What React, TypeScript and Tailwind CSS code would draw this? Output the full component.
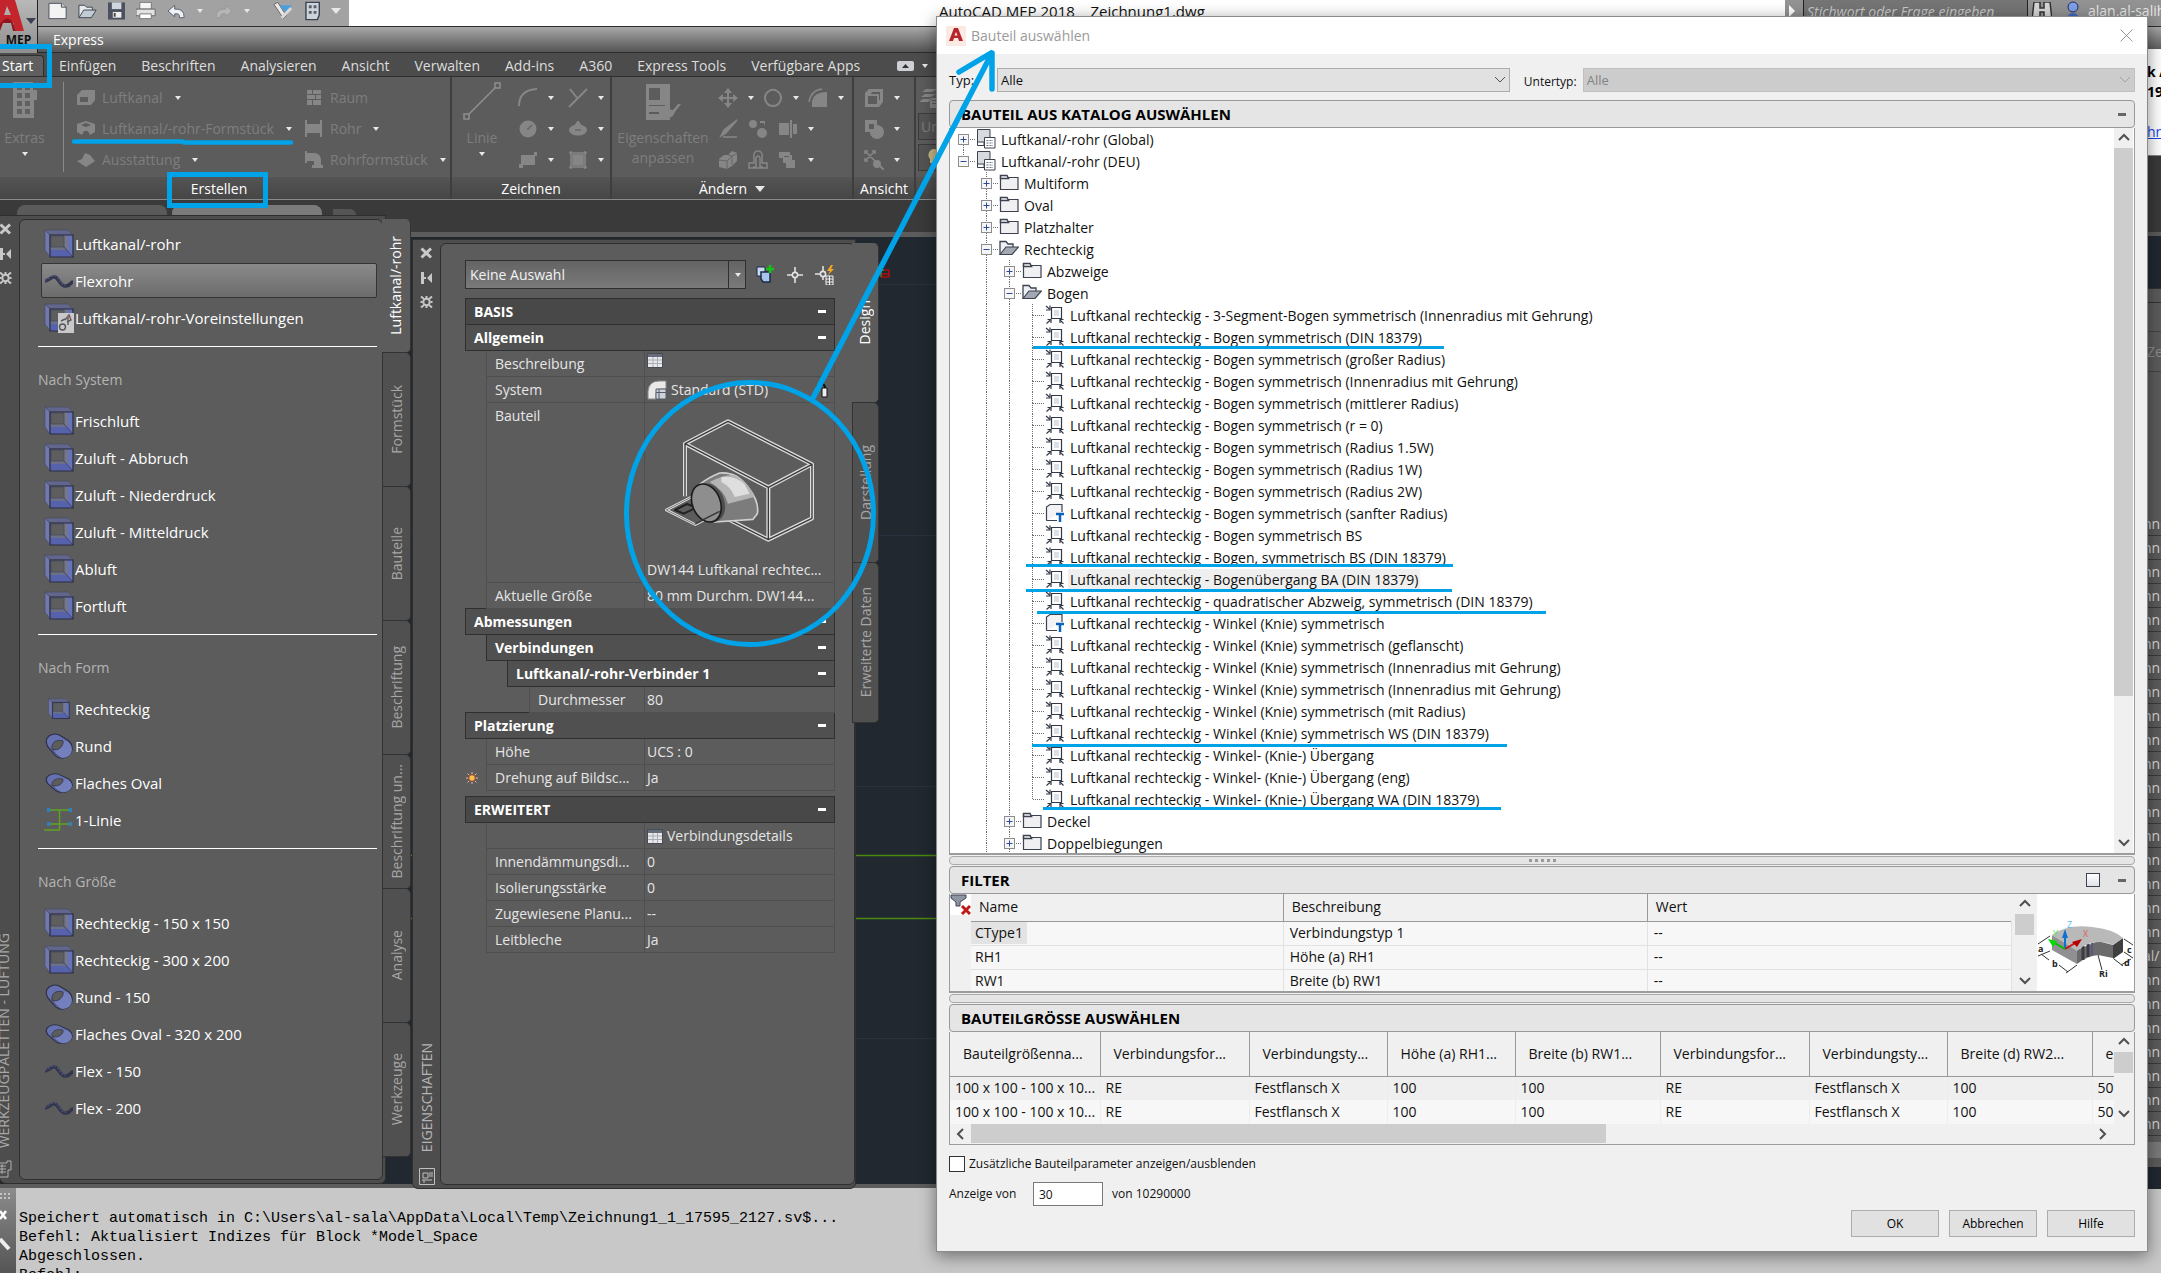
import { useState, type ReactNode } from "react";

/* ---------- data ---------- */

const RIBBON_TABS = ["Einfügen", "Beschriften", "Analysieren", "Ansicht", "Verwalten", "Add-ins", "A360", "Express Tools", "Verfügbare Apps"];

type ToolIcon = "duct" | "ductSmall" | "flex" | "prefs" | "round" | "oval" | "line";
type ToolGroup = { title?: string; items: { label: string; icon: ToolIcon }[] };

const TOOL_GROUPS: ToolGroup[] = [
  {
    items: [
      { label: "Luftkanal/-rohr", icon: "duct" },
      { label: "Flexrohr", icon: "flex" },
      { label: "Luftkanal/-rohr-Voreinstellungen", icon: "prefs" },
    ],
  },
  {
    title: "Nach System",
    items: [
      { label: "Frischluft", icon: "duct" },
      { label: "Zuluft - Abbruch", icon: "duct" },
      { label: "Zuluft - Niederdruck", icon: "duct" },
      { label: "Zuluft - Mitteldruck", icon: "duct" },
      { label: "Abluft", icon: "duct" },
      { label: "Fortluft", icon: "duct" },
    ],
  },
  {
    title: "Nach Form",
    items: [
      { label: "Rechteckig", icon: "ductSmall" },
      { label: "Rund", icon: "round" },
      { label: "Flaches Oval", icon: "oval" },
      { label: "1-Linie", icon: "line" },
    ],
  },
  {
    title: "Nach Größe",
    items: [
      { label: "Rechteckig - 150 x 150", icon: "duct" },
      { label: "Rechteckig - 300 x 200", icon: "duct" },
      { label: "Rund - 150", icon: "round" },
      { label: "Flaches Oval - 320 x 200", icon: "oval" },
      { label: "Flex - 150", icon: "flex" },
      { label: "Flex - 200", icon: "flex" },
    ],
  },
];

const PALETTE_TABS = ["Luftkanal/-rohr", "Formstück", "Bauteile", "Beschriftung", "Beschriftung un...", "Analyse", "Werkzeuge"];
const PROPERTY_TABS = ["Design", "Darstellung", "Erweiterte Daten"];

type TreeNode = { label: string; level: number; icon: "catalog" | "folder" | "open" | "part" | "param"; box?: "+" | "-"; last?: boolean };

const part = (label: string, icon: "part" | "param" = "part", last = false): TreeNode => ({
  label: `Luftkanal rechteckig - ${label}`,
  level: 3,
  icon,
  last,
});

const TREE: TreeNode[] = [
  { label: "Luftkanal/-rohr (Global)", level: 0, icon: "catalog", box: "+" },
  { label: "Luftkanal/-rohr (DEU)", level: 0, icon: "catalog", box: "-", last: true },
  { label: "Multiform", level: 1, icon: "folder", box: "+" },
  { label: "Oval", level: 1, icon: "folder", box: "+" },
  { label: "Platzhalter", level: 1, icon: "folder", box: "+" },
  { label: "Rechteckig", level: 1, icon: "open", box: "-" },
  { label: "Abzweige", level: 2, icon: "folder", box: "+" },
  { label: "Bogen", level: 2, icon: "open", box: "-" },
  part("3-Segment-Bogen symmetrisch (Innenradius mit Gehrung)"),
  part("Bogen symmetrisch (DIN 18379)"),
  part("Bogen symmetrisch (großer Radius)"),
  part("Bogen symmetrisch (Innenradius mit Gehrung)"),
  part("Bogen symmetrisch (mittlerer Radius)"),
  part("Bogen symmetrisch (r = 0)"),
  part("Bogen symmetrisch (Radius 1.5W)"),
  part("Bogen symmetrisch (Radius 1W)"),
  part("Bogen symmetrisch (Radius 2W)"),
  part("Bogen symmetrisch (sanfter Radius)", "param"),
  part("Bogen symmetrisch BS"),
  part("Bogen, symmetrisch BS (DIN 18379)"),
  part("Bogenübergang BA (DIN 18379)"),
  part("quadratischer Abzweig, symmetrisch (DIN 18379)"),
  part("Winkel (Knie) symmetrisch", "param"),
  part("Winkel (Knie) symmetrisch (geflanscht)"),
  part("Winkel (Knie) symmetrisch (Innenradius mit Gehrung)"),
  part("Winkel (Knie) symmetrisch (Innenradius mit Gehrung)"),
  part("Winkel (Knie) symmetrisch (mit Radius)"),
  part("Winkel (Knie) symmetrisch WS (DIN 18379)"),
  part("Winkel- (Knie-) Übergang"),
  part("Winkel- (Knie-) Übergang (eng)"),
  part("Winkel- (Knie-) Übergang WA (DIN 18379)", "part", true),
  { label: "Deckel", level: 2, icon: "folder", box: "+" },
  { label: "Doppelbiegungen", level: 2, icon: "folder", box: "+" },
];

const FILTERS = [
  ["CType1", "Verbindungstyp 1", "--"],
  ["RH1", "Höhe (a) RH1", "--"],
  ["RW1", "Breite (b) RW1", "--"],
];

const SIZE_HEADERS = ["Bauteilgrößenna...", "Verbindungsfor...", "Verbindungsty...", "Höhe (a) RH1...", "Breite (b) RW1...", "Verbindungsfor...", "Verbindungsty...", "Breite (d) RW2...", "e"];
const SIZE_ROW = ["100 x 100 - 100 x 10...", "RE", "Festflansch X", "100", "100", "RE", "Festflansch X", "100", "50"];

/* ---------- small pieces ---------- */

function Caret({ big = false }: { big?: boolean }) {
  return (
    <svg width={big ? 10 : 6} height={big ? 6 : 4} viewBox="0 0 10 6" preserveAspectRatio="none" className="shrink-0">
      <path d="M0 0H10L5 6Z" fill="#e8e8e8" />
    </svg>
  );
}

function Chevron({ dir, color = "#505050", thin = false }: { dir: "up" | "down" | "left" | "right"; color?: string; thin?: boolean }) {
  const d = { up: "M1 8L6 3L11 8", down: "M1 3L6 8L11 3", left: "M8 1L3 6L8 11", right: "M3 1L8 6L3 11" }[dir];
  return (
    <svg width="12" height="12" viewBox="0 0 12 12" fill="none" stroke={color} strokeWidth={thin ? 1 : 2} className="shrink-0">
      <path d={d} />
    </svg>
  );
}

function DuctIcon({ size = 30 }: { size?: number }) {
  return (
    <svg width={size} height={size} viewBox="0 0 30 30" className="shrink-0">
      <path d="M1 1L6 6V28L1 21Z" fill="#6f78b0" stroke="#47495a" strokeWidth=".6" />
      <path d="M1 1H24L29 6H6Z" fill="#62668c" stroke="#47495a" strokeWidth=".6" />
      <path d="M6 6H29V28H6Z" fill="#6a6e86" />
      <path d="M20 6H29V28L20 18Z" fill="#6673b8" />
      <path d="M20 6H24V22L20 18Z" fill="#74778a" />
      <path d="M6 18H20L29 28H6Z" fill="#5663ac" />
      <path d="M6 18H20L23 21H6Z" fill="#6c7087" />
      <path d="M7 7H20V18H7Z" fill="#5e5e5e" stroke="#4a4c5c" strokeWidth=".8" />
      <path d="M20 18L29 28" stroke="#3b3e55" strokeWidth=".8" />
      <path d="M6 6H29V28H6Z" fill="none" stroke="#2a2d40" strokeWidth="1.2" />
    </svg>
  );
}

function ToolGlyph({ icon }: { icon: ToolIcon }) {
  if (icon === "duct") return <DuctIcon />;
  if (icon === "ductSmall") return <DuctIcon size={22} />;
  if (icon === "prefs") {
    return (
      <span className="relative block size-[30px]">
        <DuctIcon />
        <svg width="17" height="20" viewBox="0 0 17 20" className="absolute right-0 bottom-0">
          <path d="M1 0H17V20H1Z" fill="#c9c9cc" />
          <circle cx="5.500" cy="14" r="3" fill="none" stroke="#555" strokeWidth="1.400" />
          <path d="M8 7L12 2L14 7L10 9M11 4V12M4 8L8 6" stroke="#5a5a5a" strokeWidth="1.400" fill="none" />
          <path d="M10 4L14 5" stroke="#b06a6a" strokeWidth="1.200" />
        </svg>
      </span>
    );
  }
  if (icon === "flex") {
    return (
      <svg width="30" height="16" viewBox="0 0 30 16" fill="none">
        <path d="M1 8C5 8 7 3 11 4S16 14 22 13S26 9 29 9" stroke="#33364a" strokeWidth="3.400" />
        <path d="M1 7C5 7 7 2 11 3S16 13 22 12" stroke="#4c5588" strokeWidth="1.200" strokeDasharray="2 1.500" />
      </svg>
    );
  }
  if (icon === "line") {
    return (
      <svg width="30" height="24" viewBox="0 0 30 24" fill="none">
        <path d="M5 2H26M5 16H26M15.500 2V22M0 22H16" stroke="#5fa324" strokeWidth="1.400" />
        <path d="M3 0h3v4h-3zM25 0h3v4h-3zM3 14h3v4h-3zM25 14h3v4h-3z" fill="#2b7fc4" />
      </svg>
    );
  }
  const flat = icon === "oval";
  return (
    <svg width="28" height={flat ? 20 : 26} viewBox="0 0 28 26" preserveAspectRatio="none">
      <path d="M3 14Q-1 7 4 3Q10 -1 16 3L24 8Q29 13 26 20Q22 26 15 25Q11 24 9 21Z" fill="#6571b0" stroke="#2c2f45" strokeWidth="1.200" />
      <ellipse cx="18" cy="16.500" rx="9" ry="8.500" fill="#7480bd" />
      <path d="M7 16C6 9 12 6 18 8C19 13 13 19 7 16Z" fill="#5c5c5c" stroke="#3a3c50" />
      <path d="M7 16C9 19 12 23 16 25" stroke="#3a3c50" strokeWidth=".8" fill="none" />
    </svg>
  );
}

function PaletteControls() {
  return (
    <svg width="13" height="62" viewBox="0 0 13 62" className="text-[#c8c8c8]">
      <path d="M1.500 1.500L11 10.500M11 1.500L1.500 10.500" stroke="currentColor" strokeWidth="3" />
      <path d="M1 25H4V37H1ZM4 30H6V32H4ZM12 26V36L7 31Z" fill="currentColor" />
      <circle cx="6.500" cy="55" r="3.200" fill="none" stroke="currentColor" strokeWidth="2" />
      <path d="M6.500 49V51M6.500 59V61M.5 55H2.500M10.500 55H12.500M1 49.500L4 52M12 49.500L9 52M1 60.500L4 58M12 60.500L9 58" stroke="currentColor" strokeWidth="2" />
    </svg>
  );
}

function SideTab({ label, active, tall }: { label: string; active: boolean; tall?: boolean }) {
  return (
    <button
      className={`flex w-full items-center justify-center rounded-r-[5px] border-r border-b border-[#333] ${tall ? "h-[160px]" : "h-[134px]"} ${
        active ? "bg-[#5c5c5c] text-white" : "border-l bg-[#505050] text-[#a6a6a6]"
      }`}
    >
      <span className="rotate-180 whitespace-nowrap [writing-mode:vertical-rl]">{label}</span>
    </button>
  );
}

/* ---------- ribbon ---------- */

const GLYPHS: Record<string, ReactNode> = {
  duct: <path d="M1 7L6 2H19V12L15 17H1ZM4 9H12V14H4Z" fillRule="evenodd" fill="currentColor" />,
  fitting: <path d="M1 5L10 2L19 5V13L14 16L12 12H8L6 16L1 13ZM5 6L10 8L15 6L10 4Z" fillRule="evenodd" fill="currentColor" />,
  equip: <path d="M1 11L6 9L9 3L14 5L19 11L10 17Z" fill="currentColor" />,
  room: <path d="M3 2H8V6H3ZM9 2H17V6H9ZM3 7H11V11H3ZM12 7H17V11H12ZM3 12H8V17H3ZM9 12H17V17H9Z" fill="currentColor" />,
  pipe: <path d="M1 1H3V5H16V1H18V18H16V14H3V18H1Z" fill="currentColor" />,
  elbow: <path d="M1 1H3V3H10Q17 3 17 11V15H19V18H8V15H10V11H3V13H1Z" fill="currentColor" />,
  arc: <path d="M1 18Q1 2 19 1" fill="none" stroke="currentColor" strokeWidth="2" />,
  cross: <path d="M1 19L19 1M2 1L10 11" fill="none" stroke="currentColor" strokeWidth="2" />,
  circle: (
    <>
      <circle cx="10" cy="10" r="8.500" fill="currentColor" />
      <path d="M10 10L14 6M9 10H11" stroke="#666" strokeWidth="1.500" />
    </>
  ),
  ellipse: (
    <>
      <ellipse cx="10" cy="11" rx="9" ry="5.500" fill="currentColor" />
      <path d="M10 2V12M6 8L10 3L14 8" stroke="currentColor" strokeWidth="2" fill="none" />
      <path d="M7 11H13" stroke="#666" strokeWidth="1.500" />
    </>
  ),
  rect: <path d="M3 5H16V2H19V6H17V15H5V18H1V14H3Z" fill="currentColor" />,
  hatch: <path d="M5 5H15V15H5ZM3 1V19M17 1V19M1 3H19M1 17H19" fill="currentColor" stroke="currentColor" strokeWidth="1.500" />,
  move: <path d="M10 0L14 5H11V9H15V6L20 10L15 14V11H11V15H14L10 20L6 15H9V11H5V14L0 10L5 6V9H9V5H6Z" fill="currentColor" />,
  rotate: <path d="M14 3A8 8 0 1 1 6 3M6 3A8 8 0 0 1 14 3" fill="none" stroke="currentColor" strokeWidth="2" />,
  fillet: (
    <>
      <path d="M4 19V13Q6 4 19 4V19Z" fill="currentColor" />
      <path d="M1 14Q3 2 14 1" fill="none" stroke="currentColor" strokeWidth="1.500" />
    </>
  ),
  edit: <path d="M19 1L8 14L3 17L6 11ZM5 18H19" fill="currentColor" stroke="currentColor" strokeWidth="1.500" />,
  copy: <path d="M5 1a4 4 0 1 1 0 8a4 4 0 1 1 0-8zM14 9a5 5 0 1 1 0 10a5 5 0 1 1 0-10zM12 2h5v5l-1-3h-4z" fill="currentColor" />,
  stretch: <path d="M1 4H11V16H1ZM12 1H14V19H12ZM15 5H19V15H15Z" fill="currentColor" />,
  blocks: (
    <>
      <path d="M1 9L6 5H10L14 1L19 3V11L14 16L9 19L1 17Z" fill="currentColor" />
      <path d="M1 10L9 11V19M9 11L14 6V15M10 5L14 6L19 4" stroke="#666" fill="none" />
    </>
  ),
  offset: <path d="M1 18V13H6V8Q5 1 10 1Q15 1 14 8V13H19V18ZM5 17H8V8Q10 4 12 8V17H15" fill="none" stroke="currentColor" strokeWidth="1.500" />,
  order: <path d="M1 2H12V5H14V10H17V18H8V13H5V8H1ZM6 6V7H11V6Z" fillRule="evenodd" fill="currentColor" />,
  cube: <path d="M1 5L5 1H19V14L15 19H1ZM4 8H13V16H4ZM8 4H16V12H15V6H7Z" fillRule="evenodd" fill="currentColor" />,
  visual: <path d="M1 1H13V6A7 7 0 1 1 6 13H1ZM5 5V10H10V5Z" fillRule="evenodd" fill="currentColor" />,
  zoomx: (
    <>
      <path d="M1 1L11 11M11 1L1 11M1 4V1H4M8 1H11V4M1 8V11H4" stroke="currentColor" strokeWidth="1.500" fill="none" />
      <circle cx="13" cy="14" r="4" fill="currentColor" />
      <path d="M16 16L20 20" stroke="currentColor" strokeWidth="2" />
    </>
  ),
  layers: <path d="M4 4L8 1H19L14 4ZM3 9L7 6H18L13 9ZM1 14L5 11H14L10 14ZM12 10H20V20H12ZM14 12V13H18V12ZM14 15V16H18V15Z" fillRule="evenodd" fill="currentColor" />,
};

function Glyph({ name }: { name: string }) {
  return (
    <svg width="20" height="20" viewBox="0 0 20 20" className="shrink-0 text-[#868686]">
      {GLYPHS[name]}
    </svg>
  );
}

function RibbonItem({ icon, label, caret }: { icon: string; label?: string; caret?: boolean }) {
  return (
    <button className="flex h-[31px] items-center text-left text-[#7e7e7e]">
      <Glyph name={icon} />
      {label && <span className="ml-[6px] whitespace-nowrap">{label}</span>}
      {caret && (
        <span className={label ? "ml-3" : "ml-2.5"}>
          <Caret />
        </span>
      )}
    </button>
  );
}

function RibbonPanel({ title, className, caret, children }: { title: string; className: string; caret?: boolean; children: ReactNode }) {
  return (
    <section className={`flex shrink-0 flex-col border-r-2 border-[#3e3e3e] ${className}`}>
      <div className="flex h-[100px] overflow-hidden pt-[5px]">{children}</div>
      <h2 className="flex h-[22px] items-center justify-center gap-2 bg-linear-to-b from-[#545454] to-[#464646] pt-px text-white">
        {title}
        {caret && <Caret big />}
      </h2>
    </section>
  );
}

function Ribbon() {
  return (
    <div className="flex h-[122px] overflow-hidden bg-[#5c5c5c]">
      <RibbonPanel title="Erstellen" className="w-[452px] [&>h2]:pr-3">
        <button className="flex w-[49px] flex-col items-center text-[#7e7e7e]">
          <svg width="26" height="36" viewBox="0 0 26 36" className="text-[#868686]">
            <path d="M1 0H21V8H25V18H22V36H1Z" fill="currentColor" />
            <path d="M5 3h5v5h-5zM13 3h5v5h-5zM5 11h5v5h-5zM13 11h5v5h-5zM5 19h5v5h-5zM13 19h5v5h-5zM5 27h5v5h-5zM13 27h5v5h-5z" fill="#606060" />
          </svg>
          <span className="mt-2.5">Extras</span>
          <span className="mt-1">
            <Caret />
          </span>
        </button>
        <div className="ml-3.5 h-[90px] w-px bg-[#8a8a8a]" />
        <div className="ml-3 w-[228px]">
          <RibbonItem icon="duct" label="Luftkanal" caret />
          <RibbonItem icon="fitting" label="Luftkanal/-rohr-Formstück" caret />
          <RibbonItem icon="equip" label="Ausstattung" caret />
        </div>
        <div>
          <RibbonItem icon="room" label="Raum" />
          <RibbonItem icon="pipe" label="Rohr" caret />
          <RibbonItem icon="elbow" label="Rohrformstück" caret />
        </div>
      </RibbonPanel>

      <RibbonPanel title="Zeichnen" className="w-[160px]">
        <button className="ml-2.5 flex w-[40px] flex-col items-center text-[#7e7e7e]">
          <svg width="38" height="38" viewBox="0 0 38 38" fill="none" stroke="#8f8f8f" strokeWidth="1.500">
            <path d="M5 33L33 5M1 32h5v5h-5zM32 1h5v5h-5z" />
          </svg>
          <span className="mt-2">Linie</span>
          <span className="mt-1">
            <Caret />
          </span>
        </button>
        <div className="ml-4">
          <RibbonItem icon="arc" caret />
          <RibbonItem icon="circle" caret />
          <RibbonItem icon="rect" caret />
        </div>
        <div className="ml-3.5">
          <RibbonItem icon="cross" caret />
          <RibbonItem icon="ellipse" caret />
          <RibbonItem icon="hatch" caret />
        </div>
      </RibbonPanel>

      <RibbonPanel title="Ändern" caret className="w-[242px]">
        <button className="flex w-[102px] flex-col items-center pt-0.5 text-[#7e7e7e]">
          <svg width="36" height="38" viewBox="0 0 36 38" className="text-[#868686]">
            <path d="M1 0H25V36H1ZM4 4V16H15V4ZM4 21H20V22H4ZM4 28H14V30H4Z" fillRule="evenodd" fill="currentColor" />
            <path d="M36 20L30 28Q26 38 15 32Q20 24 28 26L33 20Z" fill="currentColor" />
          </svg>
          <span className="mt-1.5 leading-5">Eigenschaften</span>
          <span className="leading-5">anpassen</span>
        </button>
        <div className="ml-1">
          <div className="flex gap-[9px]">
            <RibbonItem icon="move" caret />
            <RibbonItem icon="rotate" caret />
            <RibbonItem icon="fillet" caret />
          </div>
          <div className="flex gap-2.5">
            <RibbonItem icon="edit" />
            <RibbonItem icon="copy" />
            <RibbonItem icon="stretch" caret />
          </div>
          <div className="flex gap-2.5">
            <RibbonItem icon="blocks" />
            <RibbonItem icon="offset" />
            <RibbonItem icon="order" caret />
          </div>
        </div>
      </RibbonPanel>

      <RibbonPanel title="Ansicht" className="w-[62px]">
        <div className="ml-2.5">
          <RibbonItem icon="cube" caret />
          <RibbonItem icon="visual" caret />
          <RibbonItem icon="zoomx" caret />
        </div>
      </RibbonPanel>

      <RibbonPanel title="" className="min-w-0 grow">
        <div className="ml-0.5 w-[320px]">
          <RibbonItem icon="layers" />
          <div className="flex h-[27px] items-center border border-[#3c3c3c] bg-[#545454] px-0.5 text-[#7e7e7e]">Un</div>
          <div className="mt-1 flex h-[27px] items-center border border-[#3c3c3c] bg-[#545454] px-2">
            <svg width="14" height="20" viewBox="0 0 14 20">
              <path d="M7 1a6 6 0 0 1 4 10v4H3v-4A6 6 0 0 1 7 1z" fill="#c9b98a" />
              <path d="M4 16h6v3H4z" fill="#8a8a8a" />
            </svg>
          </div>
        </div>
      </RibbonPanel>
    </div>
  );
}

/* ---------- main window top ---------- */

function QuickAccess() {
  return (
    <div className="flex h-[26px] w-[311px] shrink-0 items-center gap-[11px] bg-[#a2a2a2] pr-2 pb-1 pl-[10px]">
      <svg width="20" height="18" viewBox="0 0 20 18">
        <path d="M1 1H14L19 5V17H1Z" fill="#f3f3f3" stroke="#4a4f5c" />
        <path d="M14 1V5H19" fill="#d0d0d0" stroke="#4a4f5c" />
      </svg>
      <svg width="20" height="16" viewBox="0 0 20 16">
        <path d="M1 15V2H7L9 4H15V7" fill="#e6e9ee" stroke="#3d4350" />
        <path d="M1 15L6 7H19L14 15Z" fill="#c3cbd6" stroke="#3d4350" />
      </svg>
      <svg width="18" height="18" viewBox="0 0 18 18">
        <path d="M0 0H18V18H0Z" fill="#4c5160" />
        <path d="M4 0H14V7H4Z" fill="#cfd6de" />
        <path d="M5 10H14V16H5Z" fill="#eee" />
        <path d="M6 11H8V15H6Z" fill="#444" />
      </svg>
      <svg width="20" height="18" viewBox="0 0 20 18">
        <path d="M4 0H16V7H4Z" fill="#f5f5f5" stroke="#777" />
        <path d="M0 7H20V14H0Z" fill="#e2e2e2" stroke="#666" />
        <path d="M4 12H16V17H4Z" fill="#fff" stroke="#777" />
      </svg>
      <svg width="20" height="15" viewBox="0 0 20 15">
        <path d="M1 7L8 1V5Q18 4 18 14H13Q14 9 8 10V13Z" fill="#eef1f5" stroke="#5a606e" />
      </svg>
      <Caret />
      <svg width="20" height="15" viewBox="0 0 20 15">
        <path d="M19 7L12 1V5Q2 4 2 14H7Q6 9 12 10V13Z" fill="#b5b5b5" stroke="#979797" />
      </svg>
      <Caret />
      <svg width="22" height="18" viewBox="0 0 22 18" className="ml-3">
        <path d="M1 2L5 0L14 14L11 17Z" fill="#e8e8e8" stroke="#666" />
        <path d="M7 3H20L14 12Z" fill="#4aa0dd" />
        <path d="M19 6L9 16" stroke="#d8d8d8" strokeWidth="3" />
      </svg>
      <svg width="16" height="20" viewBox="0 0 16 20">
        <path d="M1 1H15V14L13 19H1Z" fill="#cdd3da" stroke="#3d4350" strokeWidth="1.500" />
        <path d="M4 4h3v3H4zM9 4h3v3H9zM4 10h3v3H4zM9 10h3v3H9z" fill="#59606c" />
      </svg>
      <Caret big />
    </div>
  );
}

function MainHeader() {
  return (
    <header className="bg-[#4c4c4c] text-[#dcdcdc]">
      <div className="flex">
        <button aria-label="MEP" className="flex h-[53px] w-[38px] shrink-0 flex-col border-r border-[#222] bg-linear-to-b from-[#b9b9b9] to-[#8f8f8f]">
          <span className="flex">
            <svg width="24" height="32" viewBox="0 0 24 32">
              <path d="M0 0H15L24 31H16L13 22H3L0 29ZM7 6L4 15H11Z" fillRule="evenodd" fill="#c4242b" />
              <path d="M0 24Q10 10 16 31H13L11 23H3L0 31Z" fill="#8f161c" />
            </svg>
            <svg width="10" height="6" viewBox="0 0 10 6" className="mt-[18px] ml-0.5">
              <path d="M0 0H10L5 6Z" fill="#3a4150" />
            </svg>
          </span>
          <span className="w-full text-center text-xs leading-4 font-bold text-[#111]">MEP</span>
        </button>
        <div className="min-w-0 grow">
          <div className="flex h-[26px] bg-white">
            <QuickAccess />
            <div className="grow pl-[590px] text-[15px] leading-[22px] whitespace-pre text-[#111]">{"AutoCAD MEP 2018    Zeichnung1.dwg"}</div>
            <div className="flex w-[376px] shrink-0 items-start gap-2 overflow-hidden bg-[#939393]">
              <svg width="6" height="12" viewBox="0 0 6 12" className="mt-[5px] ml-1 shrink-0">
                <path d="M0 0L6 6L0 12Z" fill="#fff" />
              </svg>
              <input
                aria-label="Suche"
                placeholder="Stichwort oder Frage eingeben"
                className="h-[26px] w-[225px] shrink-0 border-x border-[#222] bg-[#757575] px-[3px] pb-1 text-[14px] italic placeholder:text-[#c9c9c9]"
              />
              <svg width="20" height="18" viewBox="0 0 20 18" className="mt-0.5 -ml-1 shrink-0">
                <path d="M2 0H8V6H12V0H18L20 18H12V10H8V18H0Z" fill="#d7d7d7" stroke="#333" strokeWidth="1.500" />
              </svg>
              <svg width="14" height="20" viewBox="0 0 14 20" className="mt-px ml-1.5 shrink-0">
                <circle cx="7" cy="6" r="5" fill="#7f9fe8" stroke="#1e2f66" />
                <path d="M1 20Q1 12 7 12T13 20Z" fill="#4468c4" />
              </svg>
              <span className="shrink-0 leading-[22px] whitespace-nowrap text-[#e8e8e8]">alan.al-salih</span>
            </div>
          </div>
          <div className="flex h-[27px] items-center border-y border-[#2c2c2c] bg-linear-to-b from-[#a9a9a9] to-[#555] pl-[15px] text-white">Express</div>
        </div>
      </div>
      <nav className="flex h-6 items-center gap-[25px] border-b border-[#2e2e2e] pt-0.5">
        <button className="-mr-[10px] h-[21px] w-[44px] self-end rounded-tr-sm border-t border-r border-[#2e2e2e] bg-[#5f5f5f] pr-2 pl-0.5 text-left text-white">Start</button>
        {RIBBON_TABS.map((t) => (
          <button key={t} className="whitespace-nowrap">
            {t}
          </button>
        ))}
        <span className="ml-3 flex items-center gap-2">
          <svg width="17" height="10" viewBox="0 0 17 10">
            <rect width="17" height="10" rx="2" fill="#cfcfd6" />
            <path d="M5 7H12L8.500 3Z" fill="#333" />
          </svg>
          <Caret />
        </span>
      </nav>
      <Ribbon />
    </header>
  );
}

/* ---------- tool palette ---------- */

function ToolPalette() {
  const [selected, setSelected] = useState("Flexrohr");
  return (
    <aside className="absolute top-[215px] bottom-[89px] left-0 flex w-[412px]">
      <div className="flex w-[386px] shrink-0 rounded-b-md border-t border-r border-b border-[#2f2f2f] bg-[#4d4d4d] pt-[3px] pr-[2px] pb-[3px]">
        <div className="flex w-[19px] shrink-0 flex-col items-end justify-between pt-1 pr-[7px] pb-0.5">
          <PaletteControls />
          <div className="flex flex-col items-end gap-3">
            <span className="rotate-180 leading-4 whitespace-nowrap text-[#a8a8a8] [writing-mode:vertical-rl]">WERKZEUGPALETTEN - LÜFTUNG</span>
            <svg width="14" height="18" viewBox="0 0 14 18" fill="none" stroke="#b0b0b0">
              <path d="M0 3H9V1H13V10H10V17H0M1 6h7M1 9h7M1 12h7M4 4v10" />
            </svg>
          </div>
        </div>
        <div className="grow rounded-md border border-[#2f2f2f] bg-[#5c5c5c] pt-[5px] pr-[5px] pl-[18px]">
          {TOOL_GROUPS.map((g, i) => (
            <div key={i} className="flex flex-col">
              {g.title && (
                <>
                  <hr className="mt-2.5 mb-[11px] h-px border-0 bg-white" />
                  <h3 className="flex h-11 items-center text-[#b4b4b4]">{g.title}</h3>
                </>
              )}
              {g.items.map((it) => (
                <button
                  key={it.label}
                  onClick={() => setSelected(it.label)}
                  className={`my-px ml-[3px] flex h-[35px] items-center rounded-xs border text-left text-[15px] text-white ${
                    selected === it.label ? "border-[#353535] bg-linear-to-b from-[#8a8a8a] to-[#6c6c6c]" : "border-transparent"
                  }`}
                >
                  <span className="flex w-[33px] justify-center">
                    <ToolGlyph icon={it.icon} />
                  </span>
                  {it.label}
                </button>
              ))}
            </div>
          ))}
        </div>
      </div>
      <div className="-ml-[4px] w-[29px] pt-1">
        {PALETTE_TABS.map((t, i) => (
          <SideTab key={t} label={t} active={i === 0} />
        ))}
      </div>
    </aside>
  );
}

/* ---------- properties ---------- */

function GroupHeader({ title, indent = "", dark }: { title: string; indent?: string; dark?: boolean }) {
  return (
    <button className={`-mt-px flex h-[27px] items-center justify-between self-stretch border border-[#2f2f2f] pr-2 pl-2 text-left font-bold text-white ${indent} ${dark ? "bg-[#484848]" : "bg-[#505050]"}`}>
      {title}
      <span className="h-[3px] w-2 bg-white" />
    </button>
  );
}

function PropRow({ label, value, tall, nested, star }: { label: string; value: ReactNode; tall?: boolean; nested?: boolean; star?: boolean }) {
  return (
    <div className={`relative flex border-r border-b border-l border-[#4f4f4f] text-[#e6e6e6] ${tall ? "h-[180px]" : "h-[26px]"} ${nested ? "ml-[64px]" : "ml-[21px]"}`}>
      {star && (
        <svg width="12" height="12" viewBox="0 0 12 12" className="absolute top-[7px] -left-[21px]">
          <circle cx="6" cy="6" r="3" fill="#f2c14e" stroke="#d8642c" />
          <path d="M6 0V2M6 10V12M0 6H2M10 6H12M1.500 1.500L3 3M9 9L10.500 10.500M1.500 10.500L3 9M9 3L10.500 1.500" stroke="#e9b7a0" />
        </svg>
      )}
      <span className={`shrink-0 border-r border-[#4f4f4f] pl-2 leading-[26px] whitespace-nowrap ${nested ? "w-[115px]" : "w-[158px]"}`}>{label}</span>
      <div className="min-w-0 grow pl-[2px] leading-[26px] whitespace-nowrap">{value}</div>
    </div>
  );
}

function TableIcon() {
  return (
    <svg width="16" height="15" viewBox="0 0 16 15" className="shrink-0">
      <rect x=".5" y=".5" width="15" height="14" fill="#e8e8ea" stroke="#474c58" />
      <path d="M1 1H15V4H1Z" fill="#666c7a" />
      <path d="M1 7H15M1 10.500H15M6 4V14M10.500 4V14" stroke="#a9adb6" />
    </svg>
  );
}

function PartPreview() {
  return (
    <svg width="154" height="127" viewBox="790 570 462 381" fill="none" strokeLinejoin="round">
      <g stroke="#dcdcdc" strokeWidth="12">
        <path d="M856 650L985 583L1237 712L1106 781ZM856 650V808M1106 781V938L1237 874V712M1106 938L980 874" />
      </g>
      <g stroke="#3a3a3a" strokeWidth="4">
        <path d="M856 650L985 583L1237 712L1106 781ZM856 650V808M1106 781V938L1237 874V712M1106 938L980 874" />
      </g>
      <path d="M800 849L873 811L962 853L887 893Z" stroke="#e0e0e0" strokeWidth="8" />
      <path d="M800 849L873 811L962 853L887 893Z" stroke="#444" strokeWidth="2" />
      <path d="M826 849L862 831L890 842L852 860Z" stroke="#222" strokeWidth="6" />
      <path d="M900 772Q925 752 960 738Q1010 733 1045 780Q1080 825 1073 860L1060 877L945 885Z" fill="#7c7c7c" stroke="#d0d0d0" strokeWidth="5" />
      <path d="M930 765Q980 740 1005 745Q1050 770 1064 810L985 830Q975 790 930 765Z" fill="#b4b4b4" />
      <path d="M965 750Q1010 745 1035 772L1050 800L1005 810Q995 780 965 765Z" fill="#dedede" />
      <ellipse cx="930" cy="827" rx="44" ry="60" transform="rotate(-22 930 827)" fill="#4e4e4e" />
      <ellipse cx="920" cy="828" rx="42" ry="59" transform="rotate(-22 920 828)" fill="#8e8e8e" stroke="#1c1c1c" strokeWidth="5" />
      <path d="M887 890L960 853" stroke="#333" strokeWidth="4" />
    </svg>
  );
}

function PropertiesPalette() {
  return (
    <aside className="absolute top-[239px] bottom-[84px] left-[412px] flex w-[468px]">
      <div className="flex w-[444px] shrink-0 rounded-b-md border border-[#2f2f2f] bg-[#4d4d4d] pt-[3px] pr-[2px] pb-[3px]">
        <div className="flex w-[27px] shrink-0 flex-col items-center justify-between pt-1">
          <PaletteControls />
          <div className="flex flex-col items-center gap-4">
            <span className="rotate-180 leading-4 whitespace-nowrap text-[#b4b4b4] [writing-mode:vertical-rl]">EIGENSCHAFTEN</span>
            <svg width="16" height="17" viewBox="0 0 16 17" fill="none" stroke="#c0c0c0">
              <path d="M.5 .5H15.500V16.500H.5ZM4 5h5v5H4zM11 4v5M13 4v5M3 12h10M5 12v3" />
            </svg>
          </div>
        </div>
        <div className="flex grow flex-col rounded-md border border-[#2f2f2f] bg-[#5c5c5c] pr-[19px] pl-[24px]">
          <div className="mt-4 flex items-center">
            <span className="relative flex">
              <select aria-label="Auswahl" className="h-[29px] w-[281px] appearance-none border border-[#2f2f2f] bg-linear-to-b from-[#646464] to-[#7a7a7a] pl-1 text-[#f2f2f2]">
                <option>Keine Auswahl</option>
              </select>
              <span className="pointer-events-none absolute inset-y-0 right-0 flex w-[18px] items-center justify-center border-l border-[#2f2f2f]">
                <Caret />
              </span>
            </span>
            <button aria-label="Auswahl umschalten" className="ml-2.5">
              <svg width="19" height="19" viewBox="0 0 19 19">
                <path d="M1 2H9V11H1Z" fill="#c9daf0" stroke="#1c2a44" />
                <path d="M5 7H14V17H7L5 14Z" fill="#a9c4ec" stroke="#1c2a44" strokeWidth="1.500" />
                <path d="M14 0V8M10 4H18" stroke="#12c512" strokeWidth="2.500" />
              </svg>
            </button>
            <button aria-label="Objekte wählen" className="ml-3">
              <svg width="16" height="16" viewBox="0 0 16 16" stroke="#e2e2e2" strokeWidth="1.600" fill="none">
                <path d="M8 0V5M8 11V16M0 8H5M11 8H16" />
                <circle cx="8" cy="8" r="2.600" />
              </svg>
            </button>
            <button aria-label="Schnellauswahl" className="ml-3">
              <svg width="20" height="20" viewBox="0 0 20 20" fill="none">
                <path d="M8 1V6M8 12V15M0 9H5" stroke="#e2e2e2" strokeWidth="1.600" />
                <circle cx="8" cy="9" r="2.600" stroke="#e2e2e2" strokeWidth="1.600" />
                <path d="M16 0L12 6H15L13 10L19 4H16L18 0Z" fill="#f5a623" />
                <path d="M11 11H18V20H11ZM11 14H18M11 17H18M14.500 11V20" stroke="#f2f2f2" />
              </svg>
            </button>
          </div>

          <div className="mt-[9px] flex flex-col pt-px">
            <GroupHeader title="BASIS" dark />
            <GroupHeader title="Allgemein" />
            <PropRow label="Beschreibung" value={<span className="block pt-0.5"><TableIcon /></span>} />
            <PropRow
              label="System"
              value={
                <span className="flex items-center gap-1">
                  <svg width="20" height="20" viewBox="0 0 20 20">
                    <path d="M1 19V11Q2 1 12 1H19V9H14Q10 10 9 13V19Z" fill="#e9e9e9" stroke="#888" />
                    <path d="M9 9H19V19H9Z" fill="#cfd3da" stroke="#555c6a" />
                    <path d="M9 12.500H19M12 9V19" stroke="#555c6a" />
                  </svg>
                  Standard (STD)
                  <svg width="12" height="15" viewBox="0 0 12 15" className="mr-1.5 ml-auto">
                    <path d="M1 8V5Q1 1 5 1Q9 1 9 5V8" stroke="#111" strokeWidth="2" fill="none" />
                    <path d="M6 5H11V14H6Z" fill="#eee" stroke="#111" />
                  </svg>
                </span>
              }
            />
            <PropRow
              tall
              label="Bauteil"
              value={
                <span className="block pt-3.5">
                  <span className="block pl-4">
                    <PartPreview />
                  </span>
                  <span className="mt-[13px] block">DW144 Luftkanal rechtec...</span>
                </span>
              }
            />
            <PropRow label="Aktuelle Größe" value="80 mm Durchm. DW144..." />
            <GroupHeader title="Abmessungen" />
            <GroupHeader title="Verbindungen" indent="ml-[21px]" />
            <GroupHeader title="Luftkanal/-rohr-Verbinder 1" indent="ml-[42px]" />
            <PropRow label="Durchmesser" value="80" nested />
            <GroupHeader title="Platzierung" />
            <PropRow label="Höhe" value="UCS : 0" />
            <PropRow label="Drehung auf Bildsc..." value="Ja" star />
            <div className="h-[6px]" />
            <GroupHeader title="ERWEITERT" dark />
            <PropRow label="" value={<span className="flex items-center gap-1"><TableIcon />Verbindungsdetails</span>} />
            <PropRow label="Innendämmungsdi..." value="0" />
            <PropRow label="Isolierungsstärke" value="0" />
            <PropRow label="Zugewiesene Planu..." value="--" />
            <PropRow label="Leitbleche" value="Ja" />
          </div>
        </div>
      </div>
      <div className="-ml-[4px] w-[27px] pt-1">
        {PROPERTY_TABS.map((t, i) => (
          <SideTab key={t} label={t} active={i === 0} tall />
        ))}
      </div>
    </aside>
  );
}

/* ---------- dialog ---------- */

function TreeGuide({ node, depth }: { node: TreeNode; depth: number }) {
  const own = depth === node.level;
  const top = own ? true : depth > 0;
  const bottom = own ? !node.last : depth > 0;
  const first = own && node.label.endsWith("(Global)");
  return (
    <svg width="23" height="22" viewBox="0 0 23 22" fill="none" className="shrink-0">
      <g stroke="#6e6e6e" strokeDasharray="1 1">
        {top && !first && <path d="M11.500 0V11" />}
        {bottom && <path d="M11.500 11V22" />}
        {own && <path d="M12 11.500H23" />}
      </g>
      {own && node.box && (
        <>
          <rect x="6.500" y="6.500" width="10" height="10" fill="#f6f6f6" stroke="#8d8d8d" />
          <path d={node.box === "+" ? "M8.500 11.500H14.500M11.500 8.500V14.500" : "M8.500 11.500H14.500"} stroke="#2c4a9a" />
        </>
      )}
    </svg>
  );
}

function TreeIcon({ icon }: { icon: TreeNode["icon"] }) {
  return (
    <svg width="20" height="20" viewBox="0 0 20 20" fill="none" className="ml-px shrink-0">
      {icon === "catalog" && (
        <>
          <path d="M1.500 .5H14V16H1.500Z" fill="#d7dade" stroke="#3c4250" />
          <path d="M1.500 13H8V16.500H1.500Z" fill="#fff" stroke="#3c4250" />
          <path d="M8.500 8.500H19V19H8.500Z" fill="#fff" stroke="#3c4250" />
          <path d="M10.500 11.500H17M10.500 14H17M10.500 16.500H17" stroke="#6a7180" strokeDasharray="2 1" />
        </>
      )}
      {icon === "folder" && (
        <>
          <path d="M1.500 4.500H19V16.500H1.500Z" fill="#f0f0f3" stroke="#3c4250" strokeWidth="1.200" />
          <path d="M1.500 2.500H8L9.500 5.500H1.500Z" fill="#f8f8f8" stroke="#3c4250" strokeWidth="1.500" />
        </>
      )}
      {icon === "open" && (
        <>
          <path d="M1 15.500V2.500H7L9 5H14V8" fill="#eef0f3" stroke="#3c4250" strokeWidth="1.300" />
          <path d="M1 15.500L7 8H19.500L13 15.500Z" fill="#a3a9b3" stroke="#3c4250" strokeWidth="1.200" />
        </>
      )}
      {icon === "part" && (
        <>
          <path d="M6.500 2.500H16.500V13.500H6.500Z" fill="#fff" stroke="#333946" strokeWidth="1.200" />
          <path d="M9 5H14V11H9Z" fill="#dcdfe4" />
          <path d="M1 1L5 4.500M18.500 18.500L15 15M1.500 18.500L5.500 15" stroke="#333946" strokeWidth="1.200" />
          <path d="M5 .5V5H1M2.500 14.500H6V18M15 18V14.500H18.500" stroke="#333946" strokeWidth="1.200" />
        </>
      )}
      {icon === "param" && (
        <>
          <path d="M1.500 17.500V4L5 1.500H17V9M1.500 17.500H12" fill="#f3f3f5" stroke="#3c4250" strokeWidth="1.200" />
          <path d="M11 11H19M15 11V19" stroke="#0b62b8" strokeWidth="2.500" />
        </>
      )}
    </svg>
  );
}

function Tree() {
  return (
    <div className="flex min-h-0 flex-1 border-x border-b-2 border-[#9c9c9c] bg-white">
      <ul className="min-w-0 grow overflow-hidden pl-0.5">
        {TREE.map((n, i) => (
          <li key={i} className="flex h-[22px] items-center">
            {Array.from({ length: n.level + 1 }, (_, d) => (
              <TreeGuide key={d} node={n} depth={d} />
            ))}
            <TreeIcon icon={n.icon} />
            <span className={`ml-[3px] px-0.5 leading-[21px] whitespace-nowrap ${n.label.includes("Bogenübergang") ? "bg-[#efefef]" : ""}`}>{n.label}</span>
          </li>
        ))}
      </ul>
      <div className="mr-px flex w-[19px] flex-col bg-[#f0f0f0]">
        <span className="flex h-5 items-center justify-center"><Chevron dir="up" /></span>
        <span className="grow-4 bg-[#cdcdcd]" />
        <span className="grow" />
        <span className="flex h-5 items-center justify-center"><Chevron dir="down" /></span>
      </div>
    </div>
  );
}

function SectionHeader({ title, children }: { title: string; children?: ReactNode }) {
  return (
    <h2 className="flex h-7 shrink-0 items-center justify-between rounded border border-[#999] bg-[#e5e5e5] pr-2 pl-[11px] text-[15px] font-bold text-black">
      {title}
      <span className="flex items-center gap-[18px]">{children}</span>
    </h2>
  );
}

function Splitter({ dots }: { dots?: boolean }) {
  return (
    <div className="my-px flex h-[9px] shrink-0 items-center justify-center gap-[3px] rounded-sm border border-[#aaa] bg-[#e5e5e5]">
      {dots && [0, 1, 2, 3, 4].map((d) => <span key={d} className="size-[3px] bg-[#9a9a9a]" />)}
    </div>
  );
}

function FilterPreview() {
  return (
    <svg width="97" height="98" viewBox="0 0 97 98" fill="none" className="shrink-0 bg-white text-[9px] font-bold">
      <path d="M15 41V56L40 70V56Z" fill="#8f8f94" />
      <path d="M40 56V70Q50 62 61 61L76 64V51L61 47Z" fill="#6b6b6b" />
      <path d="M46 52V66M51 50V63" stroke="#3b3b44" strokeWidth="3" />
      <path d="M55 49V61" stroke="#5a5688" strokeWidth="2" />
      <path d="M76 51V65L86 58V44Z" fill="#3f3f3f" />
      <path d="M15 41Q30 30 55 33Q76 35 86 44L76 51Q66 46 55 49Q46 51 40 57Z" fill="#b9b9b9" />
      <path d="M28 55V40" stroke="#0d72cf" strokeWidth="2" />
      <path d="M25 44L28 35L31 44Z" fill="#0d72cf" />
      <path d="M28 55L40 48" stroke="#c11" strokeWidth="2" />
      <path d="M45 45L35 48L40 53Z" fill="#b00" />
      <path d="M28 55L16 48" stroke="#0b0" strokeWidth="2" />
      <path d="M11 45L20 47L16 53Z" fill="#0d0" />
      <path d="M1 50L13 42M1 62L13 57M4 60L12 66M22 71L31 78M29 79L40 71M61 61L65 76M87 45L96 51M77 65L86 72M87 58L96 64M84 71L94 65" stroke="#333" />
      <g fill="#222">
        <text x="1" y="58">a</text>
        <text x="15" y="73">b</text>
        <text x="62" y="83">Ri</text>
        <text x="90" y="59">c</text>
        <text x="87" y="72">d</text>
      </g>
      <text x="30" y="34" fill="#5bb8f0" fontWeight="400">Z</text>
      <text x="46" y="43" fill="#e06060" fontWeight="400">X</text>
      <text x="16" y="43" fill="#5bdc5b" fontWeight="400">Y</text>
    </svg>
  );
}

function DialogButton({ children }: { children: ReactNode }) {
  return <button className="h-[27px] w-[88px] border border-[#adadad] bg-[#e1e1e1] text-xs text-black">{children}</button>;
}

function ComponentDialog() {
  const [showExtra, setShowExtra] = useState(false);
  return (
    <div role="dialog" aria-label="Bauteil auswählen" className="absolute top-4 right-[13px] bottom-[21px] left-[936px] flex flex-col border border-[#8a8a8a] bg-[#f0f0f0] text-[#111] shadow-[0_4px_16px_rgba(0,0,0,0.45)]">
      <div className="flex h-[37px] shrink-0 items-center justify-between bg-white pr-[14px] pl-[9px]">
        <span className="flex items-center gap-[5px] text-[#9a9a9a]">
          <svg width="20" height="20" viewBox="0 0 20 20" className="bg-[#fbe9e4]">
            <path d="M3 15L8 2H12L17 15H13L12 12H8L7 15ZM10 6L8.500 9.500H11.500Z" fillRule="evenodd" fill="#b8242b" />
          </svg>
          Bauteil auswählen
        </span>
        <button aria-label="Schließen">
          <svg width="13" height="13" viewBox="0 0 13 13" stroke="#999">
            <path d="M.5 .5L12.500 12.500M12.500 .5L.5 12.500" />
          </svg>
        </button>
      </div>

      <div className="flex min-h-0 flex-1 flex-col px-[12px] pt-[14px] pb-[14px]">
        <div className="flex h-6 shrink-0 items-center text-[13px]">
          <label htmlFor="typ" className="w-12 shrink-0">Typ:</label>
          <span className="relative flex grow-13 basis-0">
            <select id="typ" className="h-6 w-full appearance-none border border-[#adadad] bg-[#e1e1e1] pl-[3px]">
              <option>Alle</option>
            </select>
            <span className="pointer-events-none absolute inset-y-0 right-1 flex items-center"><Chevron dir="down" thin /></span>
          </span>
          <label htmlFor="untertyp" className="mr-1 ml-[14px] w-[55px] shrink-0 pt-1 text-xs whitespace-nowrap">Untertyp:</label>
          <span className="relative flex grow-14 basis-0">
            <select id="untertyp" disabled className="h-6 w-full appearance-none border border-[#bfbfbf] bg-[#ccc] pl-[3px] text-[#838383] opacity-100">
              <option>Alle</option>
            </select>
            <span className="pointer-events-none absolute inset-y-0 right-1 flex items-center"><Chevron dir="down" thin color="#a0a0a0" /></span>
          </span>
        </div>

        <div className="mt-2 flex min-h-0 flex-1 flex-col">
          <SectionHeader title="BAUTEIL AUS KATALOG AUSWÄHLEN">
            <span className="h-[3px] w-2 bg-[#666]" />
          </SectionHeader>
          <Tree />
          <Splitter dots />

          <SectionHeader title="FILTER">
            <span className="size-[14px] border border-[#3c4250] bg-linear-to-b from-white to-[#dfe2e8]" />
            <span className="h-[3px] w-2 bg-[#666]" />
          </SectionHeader>
          <div className="flex h-[99px] shrink-0 overflow-hidden border-x border-b-2 border-[#9c9c9c] bg-[#f0f0f0]">
            <svg width="21" height="21" viewBox="0 0 21 21" className="shrink-0 bg-white">
              <path d="M1 1H16V4L10 8V12H6V8L1 4Z" fill="#8f96a3" stroke="#3c4250" />
              <path d="M12 12L20 20M20 12L12 20" stroke="#c01a1a" strokeWidth="3" />
            </svg>
            <table className="min-w-0 grow table-fixed border-collapse self-start text-left">
              <thead>
                <tr className="h-[27px] border-b border-[#999]">
                  <th className="w-[30%] border-r border-[#999] pl-2 font-normal">Name</th>
                  <th className="w-[35%] border-r border-[#999] pl-2 font-normal">Beschreibung</th>
                  <th className="w-[35%] pl-2 font-normal">Wert</th>
                </tr>
              </thead>
              <tbody className="bg-[#f7f7f7]">
                {FILTERS.map(([name, desc, value]) => (
                  <tr key={name} className="h-6 border-b border-[#e2e2e2]">
                    <td className="border-r border-[#e2e2e2]">
                      <span className={`inline-block px-1 leading-[22px] ${name === "CType1" ? "bg-[#e3e3e3]" : ""}`}>{name}</span>
                    </td>
                    <td className="border-r border-[#e2e2e2] pl-1.5">{desc}</td>
                    <td className="border-r border-[#e2e2e2] pl-1.5">{value}</td>
                  </tr>
                ))}
              </tbody>
            </table>
            <div className="mr-[3px] ml-[3px] flex w-[19px] shrink-0 flex-col bg-[#f0f0f0]">
              <span className="flex h-5 items-center justify-center"><Chevron dir="up" /></span>
              <span className="h-[21px] bg-[#cdcdcd]" />
              <span className="grow" />
              <span className="flex h-5 items-center justify-center"><Chevron dir="down" /></span>
            </div>
            <FilterPreview />
          </div>
          <Splitter />

          <SectionHeader title="BAUTEILGRÖSSE AUSWÄHLEN" />
          <div className="flex h-[113px] shrink-0 flex-col border-x border-b border-[#9c9c9c]">
            <div className="flex h-[92px] overflow-hidden">
              <div className="min-w-0 grow overflow-hidden">
                <table className="w-[1210px] table-fixed border-collapse text-left">
                  <colgroup>
                    <col className="w-[150px]" />
                    <col className="w-[149px]" />
                    <col className="w-[138px]" />
                    <col className="w-[128px]" />
                    <col className="w-[145px]" />
                    <col className="w-[149px]" />
                    <col className="w-[138px]" />
                    <col className="w-[145px]" />
                    <col className="w-[68px]" />
                  </colgroup>
                  <thead>
                    <tr className="h-11 border-b border-[#999]">
                      {SIZE_HEADERS.map((h, i) => (
                        <th key={i} className="border-r border-[#999] pl-[13px] font-normal whitespace-nowrap">{h}</th>
                      ))}
                    </tr>
                  </thead>
                  <tbody>
                    {[0, 1].map((r) => (
                      <tr key={r} className={`h-6 ${r ? "bg-[#f7f7f7]" : "bg-[#efefef]"}`}>
                        {SIZE_ROW.map((c, i) => (
                          <td key={i} className="overflow-hidden border-r border-[#ededed] pl-[5px] whitespace-nowrap">{c}</td>
                        ))}
                      </tr>
                    ))}
                  </tbody>
                </table>
              </div>
              <div className="mr-px flex w-[19px] shrink-0 flex-col">
                <span className="flex h-5 items-center justify-center"><Chevron dir="up" /></span>
                <span className="h-[21px] bg-[#cdcdcd]" />
                <span className="grow" />
                <span className="flex h-5 items-center justify-center"><Chevron dir="down" /></span>
              </div>
            </div>
            <div className="flex h-[19px] items-stretch pr-5">
              <span className="flex w-[21px] items-center justify-center"><Chevron dir="left" /></span>
              <span className="w-6/11 bg-[#cdcdcd]" />
              <span className="ml-auto flex w-[22px] items-center justify-center"><Chevron dir="right" /></span>
            </div>
          </div>
        </div>

        <label className="mt-[11px] flex h-4 shrink-0 items-center gap-1 text-xs">
          <input type="checkbox" checked={showExtra} onChange={(e) => setShowExtra(e.target.checked)} className="size-4 appearance-none border border-[#333] bg-white checked:bg-[#777]" />
          Zusätzliche Bauteilparameter anzeigen/ausblenden
        </label>
        <div className="mt-2.5 flex h-6 shrink-0 items-center text-xs">
          <label htmlFor="anzeige" className="w-[84px]">Anzeige von</label>
          <input id="anzeige" defaultValue="30" className="h-6 w-[70px] border border-[#7a7a7a] bg-white px-[5px]" />
          <span className="ml-[9px]">von 10290000</span>
        </div>
        <div className="mt-1 flex shrink-0 justify-end gap-[10px]">
          <DialogButton>OK</DialogButton>
          <DialogButton>Abbrechen</DialogButton>
          <DialogButton>Hilfe</DialogButton>
        </div>
      </div>
    </div>
  );
}

/* ---------- right edge ---------- */

function EdgePanels() {
  return (
    <div className="absolute top-[49px] right-0 bottom-[84px] flex w-[14px] flex-col overflow-hidden bg-[#5c5c5c] whitespace-nowrap">
      <div className="h-[106px] shrink-0 bg-white text-black">
        <p className="pt-[13px] leading-5 font-bold">k A</p>
        <p className="leading-5 font-bold">19</p>
        <a href="#mehr" className="mt-5 block leading-5 text-blue-700 underline">hr</a>
      </div>
      <div className="h-[77px] shrink-0 border-t border-[#888] bg-[#3a3a3a]" />
      <div className="h-[56px] shrink-0 border-t-4 border-[#5c5c5c] bg-[#212830]" />
      <div className="h-[15px] shrink-0 border-y border-[#333]" />
      <div className="h-[29px] shrink-0 border-b border-[#444]" />
      <div className="h-10 shrink-0 border-b border-[#444] leading-10 text-[#8c8c8c]">Ze</div>
      <div className="flex min-h-0 grow flex-col justify-end overflow-hidden">
        {Array.from({ length: 26 }, (_, i) => (
          <div key={i} className="-ml-1 h-6 shrink-0 border-b border-[#3a3a3a] leading-6 text-[#d8d8d8]">
            {i === 18 ? "al/" : "nne"}
          </div>
        ))}
      </div>
      <div className="mt-1.5 mb-[9px] h-4 shrink-0 bg-[#7a7a7a]" />
      <div className="h-[22px] shrink-0 bg-[#212830]" />
    </div>
  );
}

/* ---------- blue markers drawn across the windows ---------- */

function Markers() {
  return (
    <svg className="pointer-events-none absolute inset-0 size-full" fill="none" stroke="#00a2e8" strokeLinecap="round">
      <g strokeWidth="5" strokeLinecap="butt">
        <path d="M0 46.500H49.500V85.500H0" />
        <path d="M169.500 174.500H265.500V205.500H169.500Z" />
      </g>
      <path d="M74 141.500H183L184 142.500H291" strokeWidth="4.500" />
      <ellipse cx="750" cy="513.500" rx="123.500" ry="131" strokeWidth="5" />
      <path d="M813 398L992 53M959 72L991 53M992 53V89" strokeWidth="5.500" />
      <g strokeWidth="3" strokeLinecap="butt">
        <path d="M1033 347.500H1444M1026 565.500H1453M1026 590.500H1452M1037 612.500H1546M1032 745.500H1507M1043 808.500H1501" />
      </g>
    </svg>
  );
}

export default function App() {
  return (
    <div className="relative flex h-screen flex-col overflow-hidden bg-[#212830] font-['Open_Sans','Noto_Sans',sans-serif] text-[14px] leading-5">
      <MainHeader />

      <div className="flex h-[33px] shrink-0 items-end gap-[5px] border-t border-[#8a8a8a] bg-[#3a3a3a] pb-[17px] pl-[17px]">
        <span className="h-[10px] w-[150px] rounded-t-lg bg-[#5a5a5a]" />
        <span className="h-[10px] w-[150px] rounded-t-lg bg-[#7b7b7b]" />
        <span className="ml-1.5 h-[6px] w-[23px] rounded-tr-lg bg-[#555]" />
      </div>
      <div className="h-[5px] shrink-0 bg-[#5c5c5c]" />

      <main className="relative grow">
        {/* drawing canvas */}
        <svg className="absolute inset-0 size-full" fill="none">
          <path d="M0 47.500H2161M0 298.500H2161M0 549.500H2161M0 801.500H2161" stroke="#2a323f" />
          <path d="M0 618.500H2161M0 681.500H2161" stroke="#4a8a10" strokeWidth="1.500" />
          <path d="M881 34V40H889V33H883M881 37H889" stroke="#f00000" />
          <path d="M881 40V34L884 33" stroke="#3c9a1c" />
        </svg>
      </main>

      <footer className="flex h-[89px] shrink-0 border-t-4 border-[#5c5c5c] bg-[#c8c8c8]">
        <div className="w-4 shrink-0 bg-linear-to-b from-[#8c8c8c] to-[#555]">
          <svg width="14" height="70" viewBox="0 0 14 70" fill="none" className="mt-1">
            <path d="M0 2H12M0 6H12" stroke="#c4c4c4" strokeWidth="2" strokeDasharray="2 2" />
            <path d="M0 19L6 27M6 19L0 27" stroke="#fff" strokeWidth="2.500" />
            <path d="M0 47L9 57" stroke="#eee" strokeWidth="4" />
          </svg>
        </div>
        <pre className="pt-[21px] pl-[3px] font-['Liberation_Mono',monospace] text-[15px] leading-[19px] text-black">
          {"Speichert automatisch in C:\\Users\\al-sala\\AppData\\Local\\Temp\\Zeichnung1_1_17595_2127.sv$...\nBefehl: Aktualisiert Indizes für Block *Model_Space\nAbgeschlossen.\nBefehl:"}
        </pre>
      </footer>

      <ToolPalette />
      <PropertiesPalette />
      <EdgePanels />
      <ComponentDialog />
      <Markers />
    </div>
  );
}
